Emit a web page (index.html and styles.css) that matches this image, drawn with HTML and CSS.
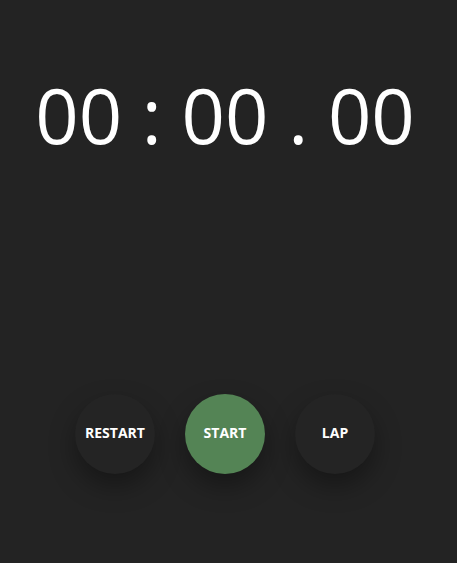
FILE: index.html
```html
<!DOCTYPE html>
<html>
<head>
<meta charset="utf-8">
<link rel="stylesheet" href="styles.css">
</head>
<body>
<div class="app">
  <div class="time">00 : 00 . 00</div>
  <div class="controls">
    <button class="btn">RESTART</button>
    <button class="btn start">START</button>
    <button class="btn">LAP</button>
  </div>
</div>
</body>
</html>
```
FILE: styles.css
```css
html, body {
  margin: 0;
  padding: 0;
  background: #232323;
  height: 100%;
}
.app {
  display: flex;
  flex-direction: column;
  align-items: center;
  width: 450px;
  height: 563px;
  font-family: "Open Sans", sans-serif;
}
.time {
  margin-top: 67px;
  color: #ffffff;
  font-size: 76px;
  line-height: 96px;
  font-weight: 400;
  white-space: pre;
}
.controls {
  margin-top: 231px;
  display: flex;
  gap: 30px;
}
.btn {
  width: 80px;
  height: 80px;
  border-radius: 50%;
  border: none;
  background: #242424;
  color: #ffffff;
  font-family: "Open Sans", sans-serif;
  font-weight: 700;
  font-size: 14px;
  padding: 0 0 3px 0;
  box-shadow: 0 12px 26px rgba(0, 0, 0, 0.35);
}
.start {
  background: #548455;
}
```
